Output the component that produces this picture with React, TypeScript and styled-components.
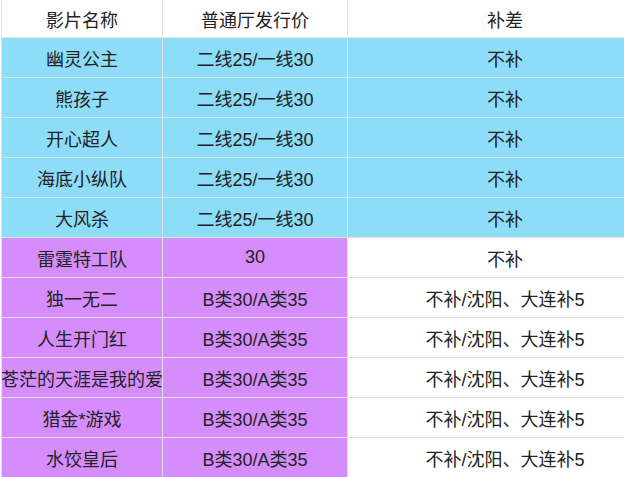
import React from 'react';
import styled, { createGlobalStyle } from 'styled-components';

type Tone = 'blue' | 'purple' | 'white';

interface Film {
  name: string;
  price: string;
  subsidy: string;
  tone: Tone;
  subsidyTone: Tone;
}

const blueRow = (name: string): Film => ({
  name,
  price: '二线25/一线30',
  subsidy: '不补',
  tone: 'blue',
  subsidyTone: 'blue',
});

const purpleRow = (name: string, price = 'B类30/A类35', subsidy = '不补/沈阳、大连补5'): Film => ({
  name,
  price,
  subsidy,
  tone: 'purple',
  subsidyTone: 'white',
});

const films: Film[] = [
  blueRow('幽灵公主'),
  blueRow('熊孩子'),
  blueRow('开心超人'),
  blueRow('海底小纵队'),
  blueRow('大风杀'),
  purpleRow('雷霆特工队', '30', '不补'),
  purpleRow('独一无二'),
  purpleRow('人生开门红'),
  purpleRow('苍茫的天涯是我的爱'),
  purpleRow('猎金*游戏'),
  purpleRow('水饺皇后'),
];

const tones: Record<Tone, string> = {
  blue: '#8ddcf8',
  purple: '#d58dfd',
  white: '#ffffff',
};

const GlobalStyle = createGlobalStyle`
  html, body {
    margin: 0;
    padding: 0;
    background: #fff;
    overflow: hidden;
  }
  body {
    font-family: "Liberation Sans", "Noto Sans CJK SC", sans-serif;
  }
`;

const Page = styled.div`
  width: 624px;
  height: 477px;
  overflow: hidden;
  padding-left: 1px;
`;

// gaps over a grey background draw the cell borders
const Table = styled.div`
  display: grid;
  grid-template-columns: 160px 184px 314px;
  grid-template-rows: 37px;
  grid-auto-rows: 39px;
  gap: 1px;
  width: max-content;
  padding: 0 1px;
  background: #e2e2e2;
`;

const Cell = styled.div<{ $tone: Tone }>`
  display: flex;
  align-items: center;
  justify-content: center;
  overflow: hidden;
  white-space: nowrap;
  background: ${(p) => tones[p.$tone]};
  color: #222;
  font-size: 18px;
`;

export default function App() {
  return (
    <Page>
      <GlobalStyle />
      <Table>
        <Cell $tone="white">影片名称</Cell>
        <Cell $tone="white">普通厅发行价</Cell>
        <Cell $tone="white">补差</Cell>
        {films.map((f) => (
          <React.Fragment key={f.name}>
            <Cell $tone={f.tone}>{f.name}</Cell>
            <Cell $tone={f.tone}>{f.price}</Cell>
            <Cell $tone={f.subsidyTone}>{f.subsidy}</Cell>
          </React.Fragment>
        ))}
      </Table>
    </Page>
  );
}
